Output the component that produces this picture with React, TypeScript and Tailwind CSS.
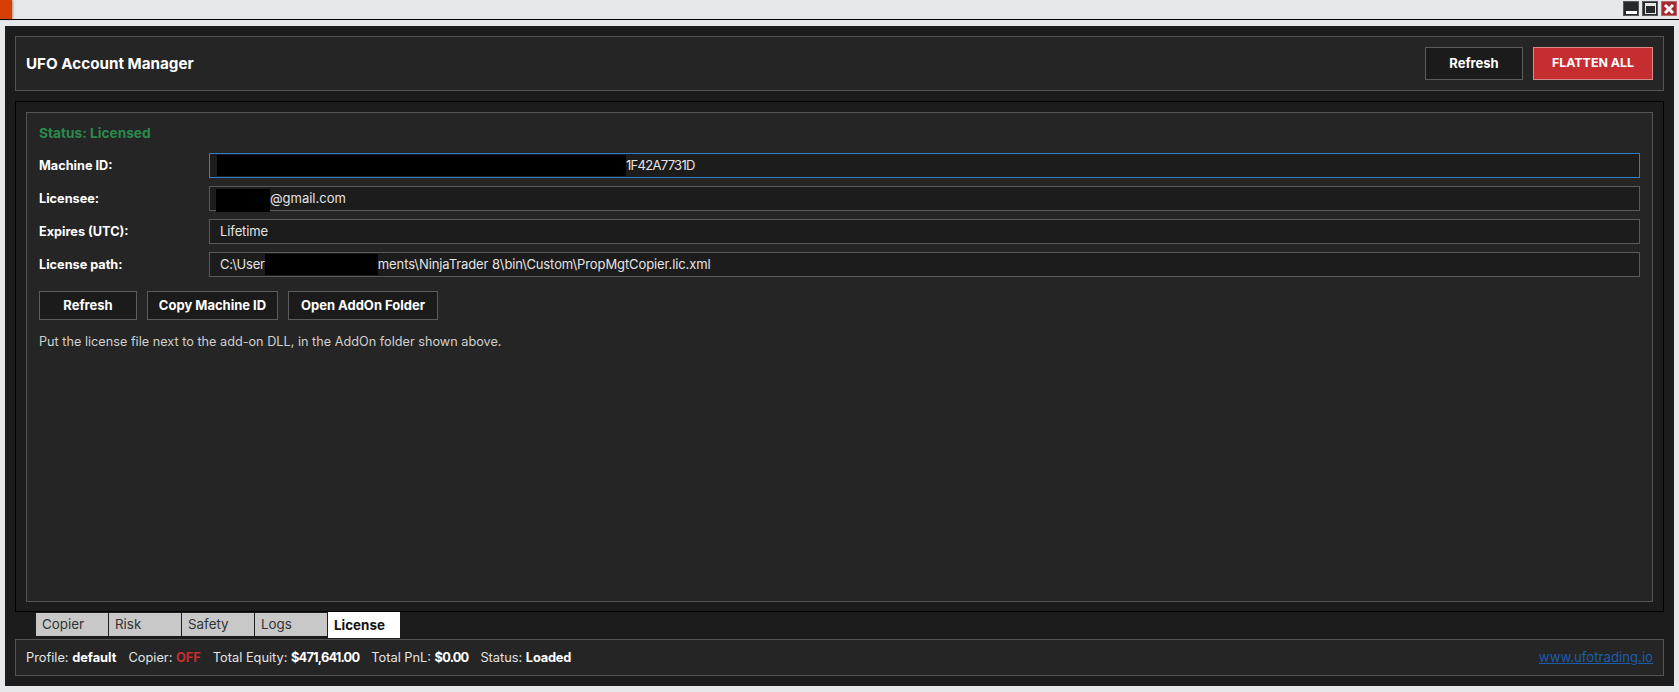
const Redact = ({ width, className = '' }: { width: string; className?: string }) => (
  <span className={`inline-block shrink-0 bg-black ${width} ${className}`} />
)

const DarkButton = ({ label, width }: { label: string; width: string }) => (
  <button className={`h-full ${width} border border-[#5c5c5c] bg-[#1b1b1b] text-[13px] font-bold text-white`}>
    {label}
  </button>
)

const Row = ({
  label,
  focused,
  children
}: {
  label: string
  focused?: boolean
  children: React.ReactNode
}) => (
  <div className="flex h-[25px] items-center">
    <div className="w-[170px] shrink-0 text-[12.7px] font-bold text-white">{label}</div>
    <div
      className={`flex h-full flex-1 items-center border bg-[#1c1c1c] pl-[10px] text-[13px] tracking-[-0.1px] text-[#e4e4e4] ${
        focused ? 'border-[#2f80c8]' : 'border-[#5a5a5a]'
      }`}
    >
      {children}
    </div>
  </div>
)

const tabs = ['Copier', 'Risk', 'Safety', 'Logs']

export default function App() {
  return (
    <div className="flex h-[692px] w-[1679px] flex-col overflow-hidden bg-[#e7e8ea] font-['Inter','Liberation_Sans',sans-serif]">
      <div className="flex h-5 shrink-0 items-start justify-between border-b border-black">
        <div className="h-[19px] w-3 bg-[#d63f00] shadow-[1px_0_2px_rgba(120,60,20,0.5)]" />
        <div className="mt-px mr-[2px] flex gap-[3px]">
          <div className="flex h-[15px] w-4 items-end justify-center border border-[#55585c] bg-[#26282b] pb-px">
            <div className="h-[3px] w-[11px] bg-white" />
          </div>
          <div className="flex h-[15px] w-4 items-center justify-center border border-[#55585c] bg-[#26282b]">
            <div className="h-[11px] w-[11px] border border-t-[3px] border-[#e8e8e8]" />
          </div>
          <div className="flex h-[15px] w-4 items-center justify-center border border-[#b56a6c] bg-[#a32a30]">
            <svg viewBox="0 0 12 12" className="h-3 w-3">
              <path d="M2 2l8 8M10 2l-8 8" stroke="#fff" strokeWidth="3" />
            </svg>
          </div>
        </div>
      </div>

      <div className="mx-[5px] mt-[6px] flex h-[660px] flex-col bg-[#1c1c1c] p-[10px]">
        <div className="flex h-[55px] shrink-0 items-center justify-between border border-[#555] bg-[#252525] pr-[10px] pl-[10px]">
          <div className="translate-y-px text-[15.2px] font-bold text-white">UFO Account Manager</div>
          <div className="flex h-[33px] gap-[10px]">
            <DarkButton label="Refresh" width="w-[98px]" />
            <button className="h-full w-[120px] border border-[#d98a8a] bg-[#c62d30] text-[12.4px] font-bold text-white">
              FLATTEN ALL
            </button>
          </div>
        </div>

        <div className="mt-[10px] h-[511px] shrink-0 border border-black p-[10px] pb-[9px]">
          <div className="h-full border border-[#555] bg-[#252525] px-3 pt-[11px]">
            <div className="mb-[10px] text-[13.7px] leading-[19px] font-bold text-[#2a8a4c]">Status: Licensed</div>
            <div className="flex flex-col gap-2">
              <Row label="Machine ID:" focused>
                <Redact width="w-[409px]" className="-ml-[3px] h-[21px]" />
                <span className="tracking-[-0.7px]">1F42A7731D</span>
              </Row>
              <Row label="Licensee:">
                <Redact width="w-[54px]" className="-ml-[4px] h-[23px] translate-y-[2px]" />
                <span className="tracking-normal">@gmail.com</span>
              </Row>
              <Row label="Expires (UTC):">
                <span>Lifetime</span>
              </Row>
              <Row label="License path:">
                <span className="tracking-[-0.15px]">C:\User</span>
                <Redact width="w-[113px]" className="h-[21px]" />
                <span>ments\NinjaTrader 8\bin\Custom\PropMgtCopier.lic.xml</span>
              </Row>
            </div>
            <div className="mt-[14px] flex h-[29px] gap-[10px]">
              <DarkButton label="Refresh" width="w-[98px]" />
              <DarkButton label="Copy Machine ID" width="w-[131px]" />
              <DarkButton label="Open AddOn Folder" width="w-[150px]" />
            </div>
            <div className="mt-[12px] text-[12.7px] text-[#d0d0d0]">
              Put the license file next to the add-on DLL, in the AddOn folder shown above.
            </div>
          </div>
        </div>

        <div className="flex h-[27px] shrink-0 items-start pl-[21px]">
          {tabs.map((tab) => (
            <div
              key={tab}
              className="mt-px flex h-[23px] w-[73px] items-center border-r border-[#1c1c1c] bg-[#c8c8c8] pl-[6px] text-[13.4px] text-[#333]"
            >
              {tab}
            </div>
          ))}
          <div className="flex h-[26px] w-[72px] items-center bg-white pl-[6px] text-[13.4px] font-bold text-[#111]">
            License
          </div>
        </div>

        <div className="flex h-[37px] shrink-0 items-center justify-between border border-[#555] bg-[#252525] pr-[10px] pl-[10px] text-[12.8px] text-[#e4e4e4]">
          <div className="flex gap-3">
            <span>
              Profile: <b className="text-white">default</b>
            </span>
            <span>
              Copier: <b className="text-[#c62d30]">OFF</b>
            </span>
            <span>
              Total Equity: <b className="tracking-[-0.8px] text-white">$471,641.00</b>
            </span>
            <span>
              Total PnL: <b className="tracking-[-0.8px] text-white">$0.00</b>
            </span>
            <span>
              Status: <b className="tracking-[-0.2px] text-white">Loaded</b>
            </span>
          </div>
          <span className="text-[13.2px] text-[#1c5cab] underline">www.ufotrading.io</span>
        </div>
      </div>
    </div>
  )
}
